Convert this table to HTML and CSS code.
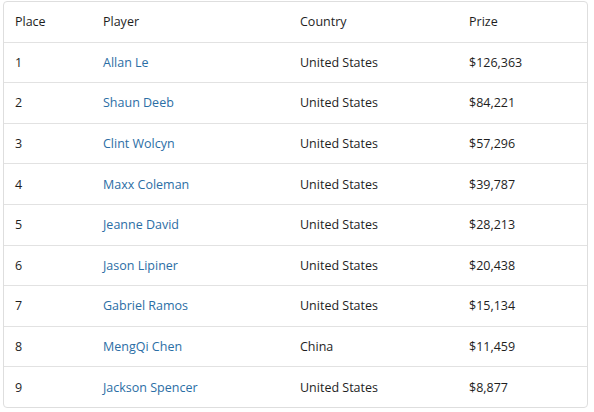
FILE: index.html
```html
<!DOCTYPE html>
<html>
<head>
<meta charset="utf-8">
<link rel="stylesheet" href="styles.css">
</head>
<body>
<table class="results">
  <colgroup>
    <col class="c-place"><col class="c-player"><col class="c-country"><col class="c-prize">
  </colgroup>
  <thead>
    <tr><th>Place</th><th>Player</th><th>Country</th><th>Prize</th></tr>
  </thead>
  <tbody>
    <tr><td>1</td><td><a href="#">Allan Le</a></td><td>United States</td><td>$126,363</td></tr>
    <tr><td>2</td><td><a href="#">Shaun Deeb</a></td><td>United States</td><td>$84,221</td></tr>
    <tr><td>3</td><td><a href="#">Clint Wolcyn</a></td><td>United States</td><td>$57,296</td></tr>
    <tr><td>4</td><td><a href="#">Maxx Coleman</a></td><td>United States</td><td>$39,787</td></tr>
    <tr><td>5</td><td><a href="#">Jeanne David</a></td><td>United States</td><td>$28,213</td></tr>
    <tr><td>6</td><td><a href="#">Jason Lipiner</a></td><td>United States</td><td>$20,438</td></tr>
    <tr><td>7</td><td><a href="#">Gabriel Ramos</a></td><td>United States</td><td>$15,134</td></tr>
    <tr><td>8</td><td><a href="#">MengQi Chen</a></td><td>China</td><td>$11,459</td></tr>
    <tr><td>9</td><td><a href="#">Jackson Spencer</a></td><td>United States</td><td>$8,877</td></tr>
  </tbody>
</table>
</body>
</html>
```
FILE: styles.css
```css
html, body {
  margin: 0;
  background: #fff;
}
body {
  padding: 1px 0 0 3px;
  font-family: "Open Sans", "Liberation Sans", sans-serif;
  font-size: 12.5px;
  color: #1e1e1e;
}
.results {
  width: 583px;
  border: 1px solid #dedede;
  border-radius: 4px;
  border-collapse: separate;
  border-spacing: 0;
  table-layout: fixed;
}
.c-place { width: 88px; }
.c-player { width: 197px; }
.c-country { width: 169px; }
.c-prize { width: 129px; }
.results th,
.results td {
  text-align: left;
  font-weight: normal;
  padding: 0 11px;
  height: 39.6px;
  vertical-align: middle;
  white-space: nowrap;
}
.results td {
  border-top: 1px solid #e2e2e2;
}
.results a {
  color: #2b6ea5;
  text-decoration: none;
}
```
